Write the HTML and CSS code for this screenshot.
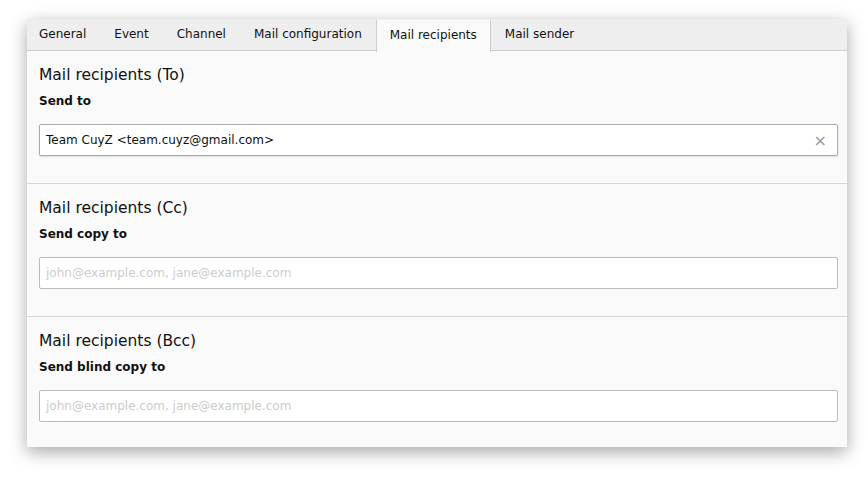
FILE: index.html
```html
<!DOCTYPE html>
<html lang="en">
<head>
  <meta charset="UTF-8" />
  <title>Mail recipients</title>
  <link rel="stylesheet" href="styles.css">
</head>
<body>
  <div class="panel">
    <ul class="tabs">
      <li>General</li>
      <li>Event</li>
      <li>Channel</li>
      <li>Mail configuration</li>
      <li class="active">Mail recipients</li>
      <li>Mail sender</li>
    </ul>

    <div class="section">
      <h3>Mail recipients (To)</h3>
      <label>Send to</label>
      <div class="field filled">
        <span>Team CuyZ &lt;team.cuyz@gmail.com&gt;</span>
        <span class="clear">&times;</span>
      </div>
    </div>

    <div class="section">
      <h3>Mail recipients (Cc)</h3>
      <label>Send copy to</label>
      <div class="field">
        <span class="placeholder">john@example.com, jane@example.com</span>
      </div>
    </div>

    <div class="section">
      <h3>Mail recipients (Bcc)</h3>
      <label>Send blind copy to</label>
      <div class="field">
        <span class="placeholder">john@example.com, jane@example.com</span>
      </div>
    </div>
  </div>
</body>
</html>
```

FILE: styles.css
```css
body {
  margin: 0;
  padding: 19px 21px 30px 27px;
  background: #fff;
  font-family: 'DejaVu Sans', Verdana, sans-serif;
  color: #111;
}
.panel {
  width: 820px;
  background: #fafafa;
  box-shadow: 0 5px 16px rgba(0,0,0,0.35);
}
.tabs {
  display: flex;
  margin: 0;
  padding: 0;
  list-style: none;
  background: #eeeeee;
  border-bottom: 1px solid #cccccc;
  height: 31px;
}
.tabs li {
  font-size: 12px;
  line-height: 31px;
  padding: 0 13px 0 11px;
  border-left: 1px solid transparent;
  border-right: 1px solid transparent;
}
.tabs li + li {
  padding-left: 13px;
}
.tabs li.active {
  background: #fafafa;
  border-color: #cccccc;
  height: 32px;
  margin-top: 1px;
  line-height: 30px;
}
.section {
  padding: 14px 9px 27px 12px;
  border-bottom: 1px solid #d6d6d6;
}
.section:last-child {
  border-bottom: none;
  padding-bottom: 25px;
}
h3 {
  margin: 0;
  font-size: 15.5px;
  font-weight: normal;
  line-height: 20px;
}
label {
  display: block;
  margin-top: 8px;
  font-size: 12px;
  font-weight: bold;
  line-height: 16px;
}
.field {
  display: flex;
  align-items: center;
  justify-content: space-between;
  margin-top: 15px;
  height: 30px;
  padding: 0 10px 0 6px;
  background: #fff;
  border: 1px solid #bbbbbb;
  border-radius: 2px;
  font-size: 12px;
}
.field.filled {
  border-color: #aaaaaa;
  box-shadow: 0 1px 2px rgba(0,0,0,0.12);
}
.placeholder {
  color: #cccccc;
}
.clear {
  color: #999;
  font-size: 16px;
}
```
